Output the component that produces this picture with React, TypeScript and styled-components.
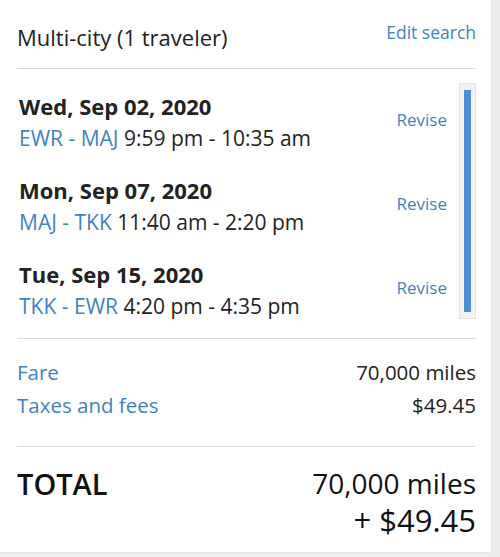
import React from 'react';
import styled, { createGlobalStyle } from 'styled-components';

const GlobalStyle = createGlobalStyle`
	html, body {
		margin: 0;
		padding: 0;
		background: #ececec;
	}
	body {
		font-family: "Open Sans", "Liberation Sans", sans-serif;
		color: #222;
	}
`

interface Segment {
	date: string;
	from: string;
	to: string;
	times: string;
}

const segments: Segment[] = [
	{ date: 'Wed, Sep 02, 2020', from: 'EWR', to: 'MAJ', times: '9:59 pm - 10:35 am' },
	{ date: 'Mon, Sep 07, 2020', from: 'MAJ', to: 'TKK', times: '11:40 am - 2:20 pm' },
	{ date: 'Tue, Sep 15, 2020', from: 'TKK', to: 'EWR', times: '4:20 pm - 4:35 pm' },
]

export default function App(): JSX.Element {
	return (
		<>
			<GlobalStyle />
			<Card>
				<Header>
					<Title>Multi-city (1 traveler)</Title>
					<EditLink href='#'>Edit search</EditLink>
				</Header>
				<Trips>
					<TripList>
						{segments.map((s) => (
							<Trip key={s.date}>
								<TripInfo>
									<TripDate>{s.date}</TripDate>
									<TripRoute>
										<Airports>{s.from} - {s.to}</Airports> {s.times}
									</TripRoute>
								</TripInfo>
								<ReviseLink href='#'>Revise</ReviseLink>
							</Trip>
						))}
					</TripList>
					<ScrollTrack>
						<ScrollThumb />
					</ScrollTrack>
				</Trips>
				<Costs>
					<CostRow>
						<CostLabel>Fare</CostLabel>
						<CostValue>70,000 miles</CostValue>
					</CostRow>
					<CostRow>
						<CostLabel>Taxes and fees</CostLabel>
						<CostValue>$49.45</CostValue>
					</CostRow>
				</Costs>
				<Total>
					<TotalLabel>TOTAL</TotalLabel>
					<TotalAmount>
						<Miles>70,000 miles</Miles>
						<Cash>+ $49.45</Cash>
					</TotalAmount>
				</Total>
			</Card>
		</>
	)
}

const Card = styled.div`
	width: 492px;
	height: 553px;
	box-sizing: border-box;
	padding: 0 15px 0 17px;
	background: #fff;
	border-right: 1px solid #e3e3e3;
	border-bottom: 1px solid #e3e3e3;
	display: flex;
	flex-direction: column;
`

const Header = styled.header`
	height: 69px;
	box-sizing: border-box;
	display: flex;
	justify-content: space-between;
	align-items: flex-start;
	border-bottom: 1px solid #dcdcdc;
`

const Title = styled.div`
	margin-top: 24px;
	font-size: 22px;
	line-height: 26px;
`

const EditLink = styled.a`
	margin-top: 20px;
	font-size: 17.5px;
	line-height: 24px;
	color: #3f82c4;
	text-decoration: none;
`

const Trips = styled.section`
	display: flex;
	border-bottom: 1px solid #dcdcdc;
	padding: 21px 0 16px;
`

const TripList = styled.div`
	flex: 1;
	display: flex;
	flex-direction: column;
	gap: 20px;
`

const Trip = styled.div`
	display: flex;
	align-items: center;
	justify-content: space-between;
	padding-right: 12px;
`

const TripInfo = styled.div`
	display: flex;
	flex-direction: column;
	padding-left: 2px;
`

const TripDate = styled.div`
	font-size: 22px;
	font-weight: 700;
	line-height: 32px;
`

const TripRoute = styled.div`
	font-size: 21px;
	line-height: 32px;
`

const Airports = styled.span`
	color: #3f82c4;
`

const ReviseLink = styled.a`
	margin-bottom: 6px;
	font-size: 17px;
	color: #3f82c4;
	text-decoration: none;
`

const ScrollTrack = styled.div`
	width: 17px;
	box-sizing: border-box;
	margin: -7px 0 3px;
	padding: 6px 4px;
	background: #f3f3f3;
	border: 1px solid #e6e1dd;
	display: flex;
`

const ScrollThumb = styled.div`
	flex: 1;
	background: #4b8fd3;
`

const Costs = styled.section`
	display: flex;
	flex-direction: column;
	gap: 3px;
	padding: 18px 0 26px;
	border-bottom: 1px solid #dcdcdc;
`

const CostRow = styled.div`
	display: flex;
	justify-content: space-between;
	font-size: 20.5px;
	line-height: 30px;
`

const CostLabel = styled.span`
	color: #3f82c4;
`

const CostValue = styled.span`
	color: #222;
`

const Total = styled.section`
	display: flex;
	justify-content: space-between;
	padding-top: 18px;
	color: #111;
`

const TotalLabel = styled.div`
	font-size: 29px;
	font-weight: 600;
	line-height: 37px;
`

const TotalAmount = styled.div`
	display: flex;
	flex-direction: column;
	align-items: flex-end;
`

const Miles = styled.span`
	font-size: 28px;
	font-weight: 500;
	line-height: 37px;
`

const Cash = styled.span`
	font-size: 31px;
	line-height: 36px;
`
